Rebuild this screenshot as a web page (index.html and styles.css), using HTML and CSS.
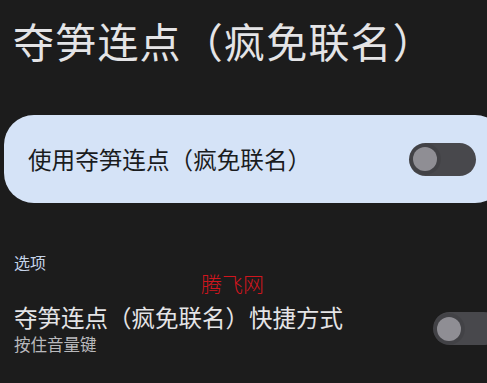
FILE: index.html
```html
<!DOCTYPE html>
<html lang="zh-CN">
<head>
<meta charset="utf-8">
<title>夺笋连点（疯免联名）</title>
<link rel="stylesheet" href="styles.css">
</head>
<body>
<div class="screen">
  <h1 class="page-title">夺笋连点（疯免联名）</h1>
  <div class="main-card">
    <span class="main-label">使用夺笋连点（疯免联名）</span>
    <span class="switch"><span class="thumb"></span></span>
  </div>
  <div class="section-label">选项</div>
  <div class="pref-row">
    <div class="pref-text">
      <div class="pref-title">夺笋连点（疯免联名）快捷方式</div>
      <div class="pref-summary">按住音量键</div>
    </div>
    <span class="switch"><span class="thumb"></span></span>
  </div>
  <div class="watermark">腾飞网</div>
</div>
</body>
</html>
```

FILE: styles.css
```css
html, body {
  margin: 0;
  padding: 0;
  background: #1c1c1c;
  overflow: hidden;
}
body {
  font-family: "Noto Sans CJK SC", "Noto Sans", sans-serif;
  width: 487px;
  height: 383px;
}
.screen {
  position: relative;
  width: 520px;
  display: flex;
  flex-direction: column;
}
.page-title {
  margin: 0;
  padding: 16px 0 0 13px;
  font-size: 41px;
  letter-spacing: 1.2px;
  line-height: 48px;
  font-weight: 400;
  color: #e4e4e6;
}
.main-card {
  margin: 51px 15px 0 4px;
  height: 88px;
  box-sizing: border-box;
  border-radius: 30px;
  background: #d5e3f7;
  display: flex;
  align-items: center;
  justify-content: space-between;
  padding: 0 29px 0 24px;
}
.main-label {
  font-size: 23.6px;
  line-height: 28px;
  color: #1a1c1e;
}
.switch {
  position: relative;
  flex: none;
  width: 67px;
  height: 33px;
  border-radius: 17px;
  background: #48484c;
  display: flex;
  align-items: center;
  padding-left: 4px;
  box-sizing: border-box;
}
.thumb {
  width: 24px;
  height: 24px;
  border-radius: 50%;
  background: #8f8e94;
  box-shadow: 0 0 0 4px rgba(0, 0, 0, 0.07);
}
.section-label {
  margin: 49px 0 0 14px;
  font-size: 16px;
  line-height: 20px;
  color: #c5d3e8;
}
.pref-row {
  margin-top: 31px;
  padding: 0 20px 0 14px;
  display: flex;
  align-items: center;
  justify-content: space-between;
}
.pref-title {
  font-size: 23.5px;
  line-height: 28px;
  color: #e4e4e6;
}
.pref-summary {
  margin-top: 3px;
  font-size: 16.5px;
  line-height: 20px;
  color: #b9b9bc;
}
.watermark {
  position: absolute;
  left: 201px;
  top: 270px;
  font-size: 21px;
  line-height: 26px;
  color: #d0161e;
  font-weight: 300;
}
```
